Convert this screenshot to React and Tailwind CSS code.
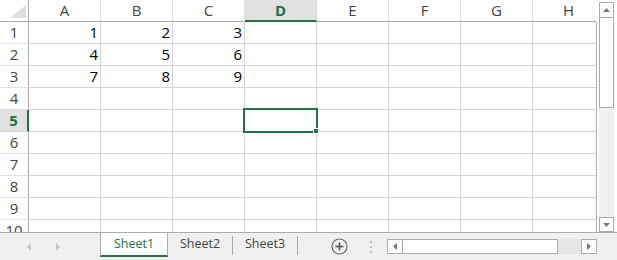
import React from "react";

const COLS = ["A", "B", "C", "D", "E", "F", "G", "H"];
const DATA = {
  1: ["1", "2", "3"],
  2: ["4", "5", "6"],
  3: ["7", "8", "9"],
};
const ROWS = [1, 2, 3, 4, 5, 6, 7, 8, 9, 10];

function Corner() {
  return (
    <div className="w-[29px] h-[22px] shrink-0 border-r border-b border-[#ababab] bg-white relative">
      <svg width="29" height="22" className="absolute left-0 top-0">
        <polygon points="26,5 26,18 10,18" fill="#dfdfdf" />
      </svg>
    </div>
  );
}

function ColHeader({ c }) {
  const active = c === "D";
  return (
    <div
      className={
        active
          ? "w-[72px] h-[22px] shrink-0 border-r border-[#d4d4d4] border-b-2 border-b-[#217346] bg-[#e1e1e1] flex items-center justify-center text-[15px] font-bold text-[#217346]"
          : "w-[72px] h-[22px] shrink-0 border-r border-[#e1e1e1] border-b border-b-[#ababab] bg-white flex items-center justify-center text-[15px] text-[#444]"
      }
    >
      {c}
    </div>
  );
}

function RowHeader({ r }) {
  const active = r === 5;
  return (
    <div
      className={
        active
          ? "w-[29px] h-[22px] shrink-0 border-r-2 border-r-[#217346] border-b border-b-[#d4d4d4] bg-[#e1e1e1] flex items-center justify-center text-[15px] font-bold text-[#217346]"
          : "w-[29px] h-[22px] shrink-0 border-r border-r-[#ababab] border-b border-b-[#e1e1e1] bg-white flex items-center justify-center text-[15px] text-[#444]"
      }
    >
      {r}
    </div>
  );
}

function Cell({ v }) {
  return (
    <div className="w-[72px] h-[22px] shrink-0 border-r border-b border-[#d4d4d4] flex items-center justify-end pr-[2px] text-[15px] text-black">
      {v}
    </div>
  );
}

function Tri({ dir, color = "#777", w = 7, h = 4 }) {
  const pts = {
    up: `0,${h} ${w},${h} ${w / 2},0`,
    down: `0,0 ${w},0 ${w / 2},${h}`,
    left: `${w},0 ${w},${h} 0,${h / 2}`,
    right: `0,0 0,${h} ${w},${h / 2}`,
  }[dir];
  return (
    <svg width={w} height={h}>
      <polygon points={pts} fill={color} />
    </svg>
  );
}

export default function App() {
  return (
    <div className="w-[617px] h-[260px] bg-white flex flex-col overflow-hidden relative font-['Segoe_UI','Open_Sans','Noto_Sans',sans-serif]">
      <div className="flex h-[232px] shrink-0">
        <div className="w-[597px] h-[232px] flex flex-col overflow-hidden relative">
          <div className="w-[596px] flex overflow-hidden shrink-0">
            <Corner />
            {COLS.map((c) => (
              <ColHeader key={c} c={c} />
            ))}
          </div>
          <div className="w-[597px] border-r border-[#ababab] overflow-hidden flex-1">
            {ROWS.map((r) => (
              <div key={r} className="flex">
                <RowHeader r={r} />
                {COLS.map((c, i) => (
                  <Cell key={c} v={DATA[r] ? DATA[r][i] : ""} />
                ))}
              </div>
            ))}
          </div>
          <div className="absolute left-[243px] top-[108px] w-[75px] h-[25px] border-2 border-[#217346]">
            <div className="absolute right-[-3px] bottom-[-3px] w-[6px] h-[6px] bg-[#217346] border border-white" />
          </div>
        </div>
        <div className="w-[20px] h-[232px] pl-[2px] pt-[2px] bg-white">
          <div className="w-[15px] h-full flex flex-col">
            <div className="h-[16px] border border-[#ababab] bg-white flex items-center justify-center">
              <Tri dir="up" />
            </div>
            <div className="h-[90px] border-x border-b border-[#ababab] bg-white" />
            <div className="flex-1 bg-[#f0f0f0]" />
            <div className="h-[15px] border border-[#ababab] bg-white flex items-center justify-center">
              <Tri dir="down" />
            </div>
          </div>
        </div>
      </div>
      <div className="h-[28px] border-t border-[#ababab] bg-[#f0f0f0] flex items-start shrink-0">
        <div className="w-[100px] h-full flex items-center">
          <div className="ml-[27px] flex">
            <Tri dir="left" color="#c8c8c8" w={4} h={8} />
          </div>
          <div className="ml-[25px] flex">
            <Tri dir="right" color="#c8c8c8" w={4} h={8} />
          </div>
        </div>
        <div className="w-[68px] h-[24px] bg-white border-x border-[#ababab] border-b-2 border-b-[#217346] flex items-center justify-center text-[12.5px] text-[#217346]">
          Sheet1
        </div>
        <div className="w-[64px] h-[23px] flex items-center justify-center text-[12.5px] text-[#444]">
          Sheet2
        </div>
        <div className="w-px h-[19px] mt-[3px] bg-[#ababab]" />
        <div className="w-[64px] h-[23px] flex items-center justify-center text-[12.5px] text-[#444]">
          Sheet3
        </div>
        <div className="w-px h-[19px] mt-[3px] bg-[#ababab]" />
        <div className="w-[33px]" />
        <div className="w-[17px] h-full flex items-center">
          <svg width="17" height="17">
            <circle cx="8.5" cy="8.5" r="7.5" fill="none" stroke="#666" strokeWidth="1.2" />
            <line x1="4.5" y1="8.5" x2="12.5" y2="8.5" stroke="#555" strokeWidth="1.6" />
            <line x1="8.5" y1="4.5" x2="8.5" y2="12.5" stroke="#555" strokeWidth="1.6" />
          </svg>
        </div>
        <div className="w-[22px]" />
        <div className="w-[2px] h-full flex flex-col items-center justify-center gap-[3px]">
          <div className="w-[2px] h-[2px] bg-[#c0c0c0]" />
          <div className="w-[2px] h-[2px] bg-[#c0c0c0]" />
          <div className="w-[2px] h-[2px] bg-[#c0c0c0]" />
        </div>
        <div className="w-[15px]" />
        <div className="w-[210px] h-[15px] mt-[6px] flex">
          <div className="w-[16px] h-[15px] border border-[#ababab] bg-white flex items-center justify-center">
            <Tri dir="left" w={4} h={7} />
          </div>
          <div className="w-[155px] h-[15px] border-y border-r border-[#ababab] bg-white" />
          <div className="flex-1 h-[15px] bg-[#e6e6e6]" />
          <div className="w-[16px] h-[15px] border border-[#ababab] bg-white flex items-center justify-center">
            <Tri dir="right" w={4} h={7} />
          </div>
        </div>
      </div>
    </div>
  );
}
